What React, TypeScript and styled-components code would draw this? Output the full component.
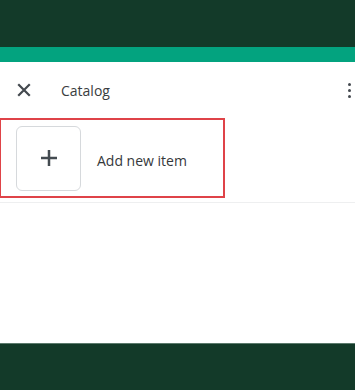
import styled, { createGlobalStyle } from "styled-components";

const GlobalStyle = createGlobalStyle`
  html, body {
    margin: 0;
    padding: 0;
    background: #ffffff;
  }
  body {
    font-family: "Open Sans", "Noto Sans", sans-serif;
  }
`;

const Screen = styled.div`
  width: 355px;
  height: 390px;
  display: flex;
  flex-direction: column;
  overflow: hidden;
`;

const TopBar = styled.div`
  height: 47px;
  background: #133a29;
`;

const Accent = styled.div`
  height: 15px;
  background: #03a37f;
`;

const Panel = styled.div`
  flex: 1;
  display: flex;
  flex-direction: column;
  background: #ffffff;
`;

const Header = styled.div`
  height: 56px;
  display: flex;
  align-items: center;
  padding: 0 4px 0 15px;
`;

const IconButton = styled.button`
  width: 18px;
  height: 18px;
  padding: 0;
  border: 0;
  background: none;
  display: flex;
  align-items: center;
  justify-content: center;
  color: #44494f;
`;

const Title = styled.span`
  flex: 1;
  margin-left: 28px;
  font-size: 14px;
  color: #3a3d40;
`;

const Kebab = styled.div`
  display: flex;
  flex-direction: column;
  gap: 3px;
  padding-top: 1px;

  span {
    width: 3px;
    height: 3px;
    border-radius: 50%;
    background: #44494f;
  }
`;

const Highlight = styled.div`
  width: 226px;
  height: 80px;
  box-sizing: border-box;
  margin-left: -1px;
  border: 2px solid #df4348;
  display: flex;
  align-items: center;
  gap: 16px;
  padding: 0 0 0 15px;
`;

const Tile = styled.div`
  width: 65px;
  height: 65px;
  box-sizing: border-box;
  border: 1px solid #d6d9dc;
  border-radius: 6px;
  display: flex;
  align-items: center;
  justify-content: center;
  color: #444b51;
`;

const Label = styled.span`
  font-size: 14px;
  color: #35383b;
  padding-top: 4px;
`;

const Divider = styled.div`
  margin-top: 4px;
  height: 1px;
  background: #eeeff0;
`;

const BottomBar = styled.div`
  height: 47px;
  background: #133a29;
  border-top: 1px solid #5b7a6c;
  box-sizing: border-box;
`;

export default function App() {
  return (
    <>
      <GlobalStyle />
      <Screen>
        <TopBar />
        <Accent />
        <Panel>
          <Header>
            <IconButton aria-label="Close">
              <svg width="14" height="14" viewBox="0 0 14 14">
                <path d="M2 2 L12 12 M12 2 L2 12" stroke="currentColor" strokeWidth="2.2" strokeLinecap="square" />
              </svg>
            </IconButton>
            <Title>Catalog</Title>
            <Kebab>
              <span />
              <span />
              <span />
            </Kebab>
          </Header>
          <Highlight>
            <Tile>
              <svg width="18" height="18" viewBox="0 0 18 18">
                <path d="M9 1 V17 M1 9 H17" stroke="currentColor" strokeWidth="2.5" />
              </svg>
            </Tile>
            <Label>Add new item</Label>
          </Highlight>
          <Divider />
        </Panel>
        <BottomBar />
      </Screen>
    </>
  );
}
